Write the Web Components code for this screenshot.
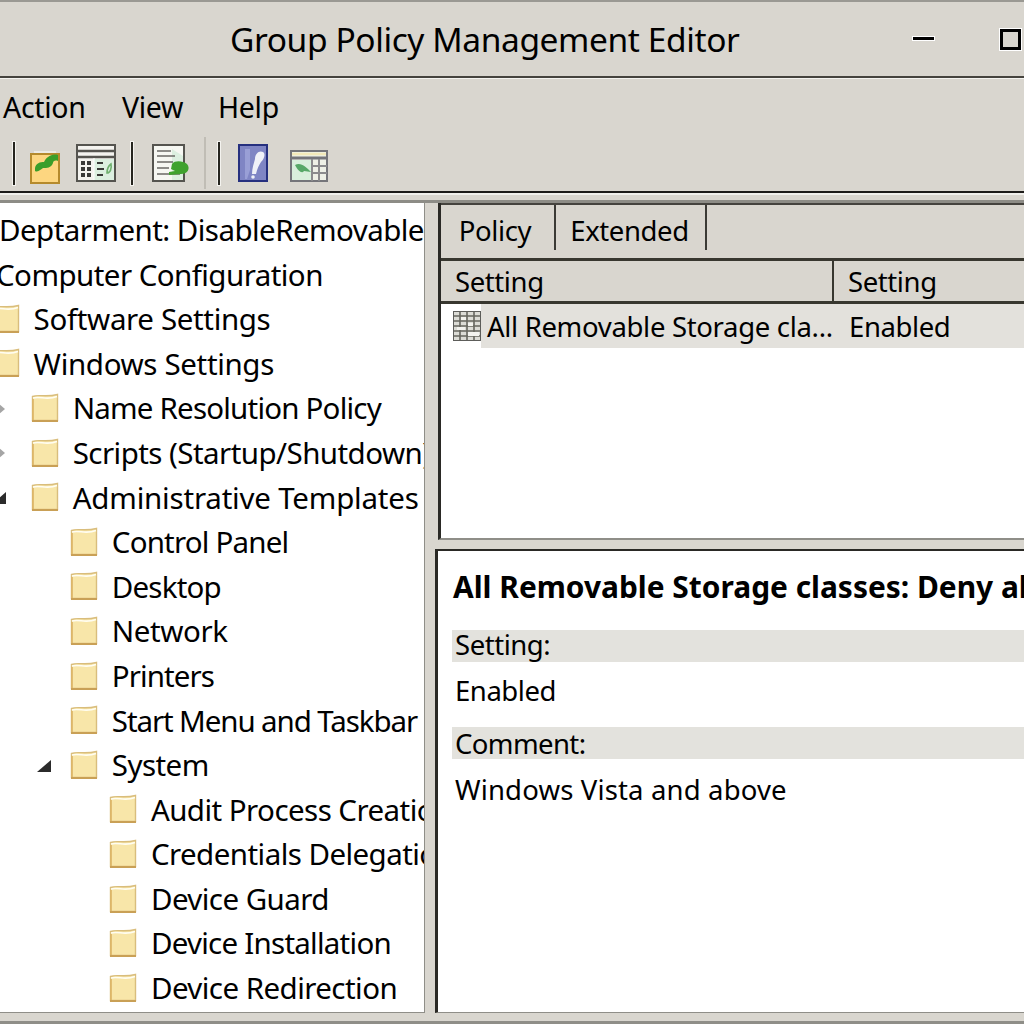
<!DOCTYPE html>
<html>
<head>
<meta charset="utf-8">
<title>Group Policy Management Editor</title>
<style>
  html, body { margin: 0; height: 100%; overflow: hidden; background: #d9d6cf; }
  body { font: 29.5px/1.2 "Noto Sans", "Open Sans", sans-serif; color: #000; }
</style>
</head>
<body>
<gp-editor>
  <gp-title-bar slot="title">Group Policy Management Editor</gp-title-bar>
  <gp-menu-bar slot="menu"></gp-menu-bar>
  <gp-tool-bar slot="tools"></gp-tool-bar>
  <gp-tree-pane slot="tree">
    <gp-tree-row depth="0" plain shift="-1">Deptarment: DisableRemovable</gp-tree-row>
    <gp-tree-row depth="0" plain shift="-4">Computer Configuration</gp-tree-row>
    <gp-tree-row depth="1" track="-.35">Software Settings</gp-tree-row>
    <gp-tree-row depth="1" track="-.35">Windows Settings</gp-tree-row>
    <gp-tree-row depth="2" toggle="closed" track="-.8">Name Resolution Policy</gp-tree-row>
    <gp-tree-row depth="2" toggle="closed">Scripts (Startup/Shutdown)</gp-tree-row>
    <gp-tree-row depth="2" toggle="open" track="-.2">Administrative Templates</gp-tree-row>
    <gp-tree-row depth="3" track="-.8">Control Panel</gp-tree-row>
    <gp-tree-row depth="3" track="-.8">Desktop</gp-tree-row>
    <gp-tree-row depth="3" track="-.4">Network</gp-tree-row>
    <gp-tree-row depth="3" track="-.9">Printers</gp-tree-row>
    <gp-tree-row depth="3" track="-1.1">Start Menu and Taskbar</gp-tree-row>
    <gp-tree-row depth="3" toggle="open">System</gp-tree-row>
    <gp-tree-row depth="4">Audit Process Creation</gp-tree-row>
    <gp-tree-row depth="4">Credentials Delegation</gp-tree-row>
    <gp-tree-row depth="4">Device Guard</gp-tree-row>
    <gp-tree-row depth="4" track="-.75">Device Installation</gp-tree-row>
    <gp-tree-row depth="4">Device Redirection</gp-tree-row>
  </gp-tree-pane>
  <gp-policy-list slot="list"></gp-policy-list>
  <gp-detail-pane slot="detail"></gp-detail-pane>
</gp-editor>

<script>
const FOLDER = `<svg width="28" height="30" viewBox="0 0 28 30">
  <path d="M1.5 3.5 C8 1 14 4.5 26.5 1.5 V27.5 H1.5 Z" fill="#f8e6a9" stroke="#d9bd7c" stroke-width="1.4"/>
  <path d="M2 5 C9 3 16 7.5 26 3.5" fill="none" stroke="#fffdf2" stroke-width="1.6"/>
  <path d="M2 6 V27" stroke="#dcb565" stroke-width="1.6"/>
  <path d="M1 28 H27" stroke="#c9a056" stroke-width="2"/>
</svg>`;

class GpEditor extends HTMLElement {
  constructor() {
    super();
    this.attachShadow({mode: 'open'}).innerHTML = `
      <style>
        :host { display: flex; flex-direction: column; width: 1024px; height: 1024px; overflow: hidden; background: #d9d6cf; }
        .split { flex: 1; display: grid; grid-template-columns: 425px 1fr; grid-template-rows: minmax(0, 1fr); min-height: 0; padding-bottom: 8px; }
        .right { display: flex; flex-direction: column; min-width: 0; padding-left: 10px; }
        .foot { flex: none; height: 3px; background: #8f8e88; }
      </style>
      <slot name="title"></slot>
      <slot name="menu"></slot>
      <slot name="tools"></slot>
      <div class="split">
        <slot name="tree"></slot>
        <div class="right">
          <slot name="list"></slot>
          <slot name="detail"></slot>
        </div>
      </div>
      <div class="foot"></div>`;
  }
}

class GpTitleBar extends HTMLElement {
  constructor() {
    super();
    this.attachShadow({mode: 'open'}).innerHTML = `
      <style>
        :host { display: flex; align-items: center; height: 74px; border-top: 2px solid #9a9993; border-bottom: 2px solid #45433e; box-shadow: 0 1px 0 #f4f3ef; position: relative; }
        .text { margin-left: 230px; font-size: 33.5px; letter-spacing: -.4px; white-space: nowrap; }
        .min { position: absolute; left: 913px; top: 35px; width: 21px; height: 3px; background: #000; outline: 1px solid #fff; }
        .max { position: absolute; left: 1000px; top: 27px; width: 15px; height: 15px; border: 3px solid #000; outline: 1px solid #fff; }
      </style>
      <span class="text"><slot></slot></span>
      <span class="min"></span>
      <span class="max"></span>`;
  }
}

class GpMenuBar extends HTMLElement {
  constructor() {
    super();
    this.attachShadow({mode: 'open'}).innerHTML = `
      <style>
        :host { display: flex; align-items: center; height: 57px; padding: 2px 0 0 3px; box-sizing: border-box; font-size: 28.5px; letter-spacing: -.3px; white-space: nowrap; }
        .a { width: 119px; }
        .v { width: 96px; }
      </style>
      <span class="a">Action</span><span class="v">View</span><span>Help</span>`;
  }
}

class GpToolBar extends HTMLElement {
  constructor() {
    super();
    this.attachShadow({mode: 'open'}).innerHTML = `
      <style>
        :host { display: block; height: 56px; border-bottom: 2px solid #1d1c1a; box-shadow: 0 2px 0 #f1f0ec; margin-bottom: 10px; position: relative; }
        .row { display: flex; align-items: center; height: 56px; }
        .sep { width: 2px; height: 43px; background: #26251f; outline: 1px solid #f4f3ef; }
        .sep.faint { height: 52px; background: #c0bdb5; outline: none; }
        svg { display: block; flex: none; overflow: visible; }
        :host::after { content: ""; position: absolute; left: 0; right: 0; top: 65px; height: 3px; background: #8d8c86; }
      </style>
      <div class="row">
        <span class="sep" style="margin-left:13px"></span>
        <svg style="margin-left:15px;margin-top:7px" width="30" height="34" viewBox="0 0 30 34">
          <path d="M4 2 H26" stroke="#eceae4" stroke-width="2"/>
          <rect x="1" y="4" width="28" height="29" fill="#fdd680" stroke="#b58a2c" stroke-width="2"/>
          <path d="M5 18 C6 13 10 12 14 12 C16 8 21 3 28 5 L28 11 C25 10 23 11 23 13 C21 18 17 18 13 18 C11 19 8 23 5 21 Z" fill="#3a9e2a"/>
        </svg>
        <svg style="margin-left:16px" width="40" height="38" viewBox="0 0 40 38">
          <rect x="1" y="1" width="38" height="36" fill="#f4f3ef" stroke="#55544f" stroke-width="2"/>
          <path d="M1 7 H39 M1 13 H39" stroke="#55544f" stroke-width="2.4"/>
          <rect x="18" y="15" width="20" height="21" fill="#dcefe0"/>
          <path d="M18 14 V36" stroke="#fff" stroke-width="1"/>
          <path d="M5 17h4v4H5zM11 17h4v4h-4zM5 23h4v4H5zM11 23h4v4h-4zM5 29h4v4H5zM11 29h4v4h-4z" fill="#3a3a38"/>
          <path d="M21 18h6v2h-6zM21 24h7v2h-7zM21 30h6v2h-6z" fill="#3a3a38"/>
          <path d="M31 29 C31 23 35 20 35 20 C36 25 34 29 31 29 Z" fill="none" stroke="#6fb06f" stroke-width="1.6"/>
        </svg>
        <span class="sep" style="margin-left:15px"></span>
        <svg style="margin-left:19px" width="33" height="38" viewBox="0 0 33 38">
          <rect x="1" y="1" width="31" height="36" fill="#f6f7f2" stroke="#55544f" stroke-width="2"/>
          <path d="M20 5 L31 12 V36 H20 Z" fill="#dcefe0"/>
          <path d="M5 7h14M5 12h18M5 18h16M5 24h12M5 30h23" stroke="#6b6a65" stroke-width="1.3"/>
          <path d="M20 20 C23 16 31 17 35 20 C39 25 35 30 29 30 L17 31 L17 28 L23 27 L19 25 Z" fill="#3fa22e"/>
        </svg>
        <span class="sep faint" style="margin-left:19px"></span>
        <span class="sep" style="margin-left:12px"></span>
        <svg style="margin-left:18px" width="30" height="38" viewBox="0 0 30 38">
          <rect x="1" y="1" width="28" height="36" fill="#7f85c4" stroke="#26307f" stroke-width="2"/>
          <path d="M7 5 H12 V26 L9 35 H7 Z" fill="#999fd6"/>
          <path d="M17 15 C17 10 21 6 25 8 C28 10 26 15 23 18 C21 21 19 25 18 30 L14 30 C14 24 16 19 17 15 Z" fill="#f0f1f8"/>
          <circle cx="15" cy="33" r="1.8" fill="#f0f1f8"/>
        </svg>
        <svg style="margin-left:22px;margin-top:6px" width="38" height="32" viewBox="0 0 38 32">
          <rect x="1" y="1" width="36" height="30" fill="#eef0e6" stroke="#75757a" stroke-width="2"/>
          <path d="M1 8 H37" stroke="#75757a" stroke-width="3"/>
          <path d="M2 4 H36" stroke="#f3e9b9" stroke-width="2.5"/>
          <rect x="2" y="10" width="20" height="20" fill="#d9efdc"/>
          <path d="M22 9 V31 M29 9 V31 M22 16 H37 M22 23 H37" stroke="#8b8b8d" stroke-width="2"/>
          <path d="M5 15 C11 12 16 17 21 22 L14 21 C12 24 8 21 5 15 Z" fill="#57a868"/>
        </svg>
      </div>`;
  }
}

class GpTreePane extends HTMLElement {
  constructor() {
    super();
    this.attachShadow({mode: 'open'}).innerHTML = `
      <style>
        :host { display: block; background: #fff; border-right: 1px solid #8f8e88; border-bottom: 1px solid #8f8e88; overflow: hidden; padding-top: 4.4px; box-sizing: border-box; height: 100%; }
      </style>
      <slot></slot>`;
  }
}

class GpTreeRow extends HTMLElement {
  constructor() {
    super();
    const depth = +this.getAttribute('depth');
    const plain = this.hasAttribute('plain');
    const toggle = this.getAttribute('toggle');
    const shift = +(this.getAttribute('shift') || 0);
    const track = this.getAttribute('track') || '-.55';
    const pad = plain ? shift : depth * 39.1 - 47;
    let arrow = '';
    if (toggle) {
      const left = toggle === 'open' ? (depth === 3 ? -34 : -40) : -41;
      arrow = `<svg class="arrow" style="left:${left}px" width="16" height="14" viewBox="0 0 16 14">${toggle === 'open'
        ? '<path d="M15 1 V13 H1 Z" fill="#2b2b2b"/>'
        : '<path d="M9 2 L15 7 L9 12 Z" fill="#a5a5a5"/>'}</svg>`;
    }
    this.attachShadow({mode: 'open'}).innerHTML = `
      <style>
        :host { display: block; height: 44.6px; }
        .row { display: flex; align-items: center; height: 100%; white-space: nowrap; position: relative; margin-left: ${pad}px; }
        .text { margin-left: ${plain ? 0 : 13.5}px; letter-spacing: ${track}px; }
        .arrow { position: absolute; top: 16px; }
        .folder svg { display: block; }
      </style>
      <div class="row">${plain ? '' : `<span class="folder">${FOLDER}</span>`}${arrow}<span class="text"><slot></slot></span></div>`;
  }
}

class GpPolicyList extends HTMLElement {
  constructor() {
    super();
    this.attachShadow({mode: 'open'}).innerHTML = `
      <style>
        :host { display: block; height: 337px; box-sizing: border-box; background: #fff; border-left: 3px solid #2a2925; border-bottom: 2px solid #8f8e88; margin-left: 3px; overflow: hidden; font-size: 27.5px; letter-spacing: -.4px; }
        .tabs { display: flex; height: 47px; background: #d9d6cf; border-top: 2px solid #45433e; box-sizing: border-box; }
        .tab { display: flex; align-items: center; justify-content: center; border-right: 2px solid #3b3a35; height: 45px; box-sizing: border-box; padding-top: 6px; }
        .tab.a { width: 115px; padding-right: 5px; }
        .tab.b { width: 151px; padding-right: 2px; }
        .strip { height: 8px; background: #d9d6cf; border-bottom: 3px solid #38372f; }
        .head { display: flex; height: 40px; background: #d9d6cf; border-bottom: 3px solid #38372f; white-space: nowrap; }
        .head span { display: flex; align-items: center; padding: 0 0 0 14px; box-sizing: border-box; }
        .head .c1 { width: 393px; border-right: 2px solid #38372f; }
        .row { display: flex; align-items: center; height: 44px; white-space: nowrap; position: relative; }
        .sel { display: flex; align-items: center; margin-left: 40px; flex: 1; height: 100%; background: #e3e1dc; padding-left: 6px; }
        .sel .c1 { width: 362px; letter-spacing: -.32px; }
        svg { position: absolute; left: 12px; top: 7px; }
      </style>
      <div class="tabs"><div class="tab a">Policy</div><div class="tab b">Extended</div></div>
      <div class="strip"></div>
      <div class="head"><span class="c1">Setting</span><span>Setting</span></div>
      <div class="row">
        <svg width="28" height="30" viewBox="0 0 28 30">
          <rect x=".5" y=".5" width="27" height="29" fill="#dcdcd6" stroke="#5d5d5a"/>
          <path d="M1 5h26M1 10h26M1 15h26M1 20h26M1 25h26M7 1v28M14 1v28M21 1v28" stroke="#66665f" stroke-width="1.6"/>
          <path d="M8 6h5v3H8zM15 12h5v3h-5zM4 16h8v3H4zM15 21h11v4H15z" fill="#f3f3ef"/>
        </svg>
        <div class="sel"><span class="c1">All Removable Storage cla...</span><span>Enabled</span></div>
      </div>`;
  }
}

class GpDetailPane extends HTMLElement {
  constructor() {
    super();
    this.attachShadow({mode: 'open'}).innerHTML = `
      <style>
        :host { display: block; flex: 1; min-height: 0; margin-top: 9px; background: #fff; border-top: 2px solid #2a2925; border-left: 3px solid #2a2925; border-bottom: 1px solid #8f8e88; overflow: hidden; white-space: nowrap; padding-left: 14px; font-size: 27.5px; letter-spacing: -.45px; }
        h2 { font-size: 29.9px; letter-spacing: 0; font-weight: 700; margin: 16px 0 0 1px; height: 40px; line-height: 40px; }
        .bar { height: 32px; line-height: 30px; background: #e3e2dd; margin-top: 23px; padding-left: 3px; }
        .bar.next { margin-top: 19px; line-height: 33px; letter-spacing: -.6px; }
        .val { height: 46px; line-height: 58px; padding-left: 3px; }
        .wide { letter-spacing: .15px; line-height: 62px; }
      </style>
      <h2>All Removable Storage classes: Deny all access</h2>
      <div class="bar">Setting:</div>
      <div class="val">Enabled</div>
      <div class="bar next">Comment:</div>
      <div class="val wide">Windows Vista and above</div>`;
  }
}

customElements.define('gp-editor', GpEditor);
customElements.define('gp-title-bar', GpTitleBar);
customElements.define('gp-menu-bar', GpMenuBar);
customElements.define('gp-tool-bar', GpToolBar);
customElements.define('gp-tree-pane', GpTreePane);
customElements.define('gp-tree-row', GpTreeRow);
customElements.define('gp-policy-list', GpPolicyList);
customElements.define('gp-detail-pane', GpDetailPane);
</script>
</body>
</html>
